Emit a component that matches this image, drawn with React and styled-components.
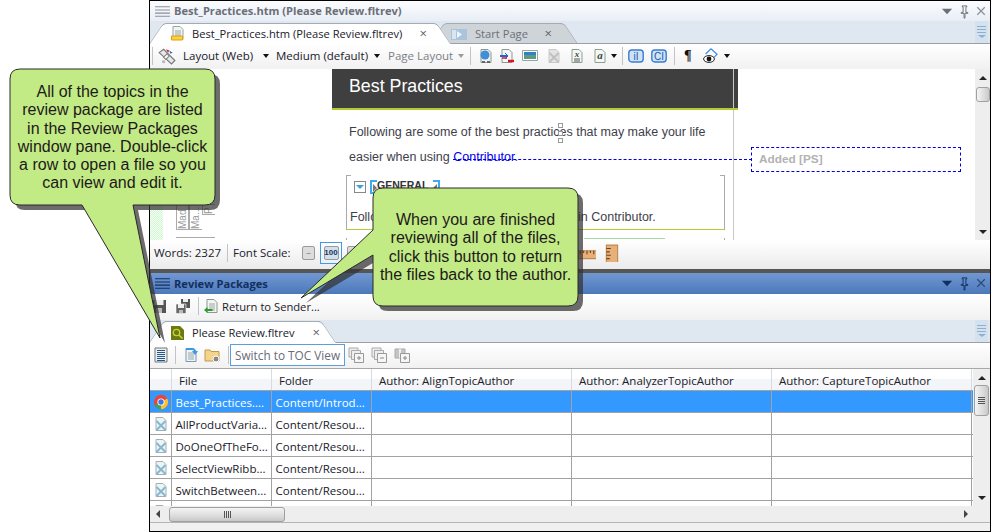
import React from "react";
import styled, { createGlobalStyle } from "styled-components";

const GlobalStyle = createGlobalStyle`
  html, body {
    margin: 0;
    padding: 0;
    background: #fff;
  }
  body {
    width: 991px;
    height: 532px;
    overflow: hidden;
    font-family: "Open Sans", "Noto Sans", sans-serif;
    color: #20202a;
  }
`;

const Page = styled.div`
  position: relative;
  width: 991px;
  height: 532px;
  padding-left: 149px;
  box-sizing: border-box;
`;

const Window = styled.div`
  width: 842px;
  height: 532px;
  box-sizing: border-box;
  border: 1px solid #000;
  display: flex;
  flex-direction: column;
  background: #fff;
  overflow: hidden;
`;

const TitleBar = styled.div`
  height: ${(p) => (p.$blue ? "21px" : "20px")};
  flex: none;
  display: flex;
  align-items: center;
  padding: 0 1px 0 4px;
  background: ${(p) =>
    p.$blue
      ? "linear-gradient(#7198d2, #4c78ba)"
      : "linear-gradient(#fbfcfe, #e9eef6)"};
`;

const TitleText = styled.span`
  flex: 1;
  margin-left: 3px;
  padding-bottom: ${(p) => (p.$blue ? "0" : "2px")};
  font-size: 11.1px;
  font-weight: 700;
  white-space: nowrap;
  color: ${(p) => (p.$blue ? "#12305f" : "#6a6f78")};
`;

const TitleIcons = styled.div`
  display: flex;
  align-items: center;
  gap: 2px;
`;

const TabStrip = styled.div`
  height: ${(p) => p.$h}px;
  flex: none;
  box-sizing: border-box;
  display: flex;
  align-items: flex-end;
  background: #dfe7f0;
  border-bottom: 1px solid #9aa0a6;
`;

const Tab = styled.div`
  position: relative;
  box-sizing: border-box;
  width: ${(p) => p.$w}px;
  height: ${(p) => p.$h}px;
  margin-left: ${(p) => p.$ml}px;
  margin-bottom: ${(p) => (p.$active ? "-1px" : "0")};
  display: flex;
  align-items: center;
  background: ${(p) => (p.$active ? "#fff" : "#cfd4d9")};
  border-top: 1px solid #a4abb3;
  color: ${(p) => (p.$active ? "#20202a" : "#6c7078")};
  z-index: ${(p) => (p.$active ? 2 : 1)};

  &::before,
  &::after {
    content: "";
    position: absolute;
    top: -1px;
    bottom: 0;
    width: 18px;
    background: inherit;
    border-top: 1px solid #a4abb3;
  }
  &::before {
    left: -9px;
    transform: skewX(-34deg);
    border-left: 1px solid #a4abb3;
    border-top-left-radius: 4px;
  }
  &::after {
    right: -9px;
    transform: skewX(34deg);
    border-right: 1px solid #a4abb3;
    border-top-right-radius: 4px;
  }
`;

const TabInner = styled.div`
  position: relative;
  z-index: 1;
  width: 100%;
  box-sizing: border-box;
  display: flex;
  align-items: center;
  padding-left: 5px;
  padding-bottom: ${(p) => (p.$lift ? "2px" : "0")};
`;

const TabLabel = styled.span`
  margin-left: ${(p) => p.$ml}px;
  font-size: 11.15px;
  white-space: nowrap;
`;

const TabClose = styled.span`
  margin-left: auto;
  margin-right: ${(p) => p.$mr}px;
  font-size: 13px;
  line-height: 1;
  color: #606468;
`;

const StripButton = styled.div`
  margin-left: auto;
  margin-right: 2px;
  align-self: stretch;
  width: 13px;
  display: flex;
  flex-direction: column;
  align-items: center;
  justify-content: center;
  gap: 2px;
  background: #d4e2ef;
`;

const StripLine = styled.i`
  display: block;
  width: 9px;
  height: 1px;
  background: #8fb0cc;
`;

const StripArrow = styled.i`
  display: block;
  width: 0;
  height: 0;
  border-left: 4px solid transparent;
  border-right: 4px solid transparent;
  border-top: 3px solid #8fb0cc;
`;

const Toolbar = styled.div`
  height: ${(p) => p.$h}px;
  flex: none;
  box-sizing: border-box;
  display: flex;
  align-items: center;
  padding-bottom: 2px;
  background: linear-gradient(#fff, #f1f1f1);
  border-bottom: ${(p) => (p.$line ? "1px solid #a8a8a8" : "none")};
`;

const Sep = styled.i`
  display: block;
  width: 1px;
  height: 18px;
  flex: none;
  margin-left: ${(p) => p.$ml}px;
  background: #c0c4c8;
`;

const Slot = styled.span`
  display: flex;
  flex: none;
  margin-left: ${(p) => p.$ml || 0}px;
`;

const ToolLabel = styled.span`
  flex: none;
  width: ${(p) => p.$w}px;
  margin-left: ${(p) => p.$ml}px;
  font-size: ${(p) => p.$size || 11.5}px;
  white-space: nowrap;
  color: ${(p) => (p.$muted ? "#7c7e88" : "#20202a")};
`;

const Caret = styled.i`
  display: block;
  flex: none;
  margin-left: ${(p) => p.$ml}px;
  width: 0;
  height: 0;
  border-left: 3.5px solid transparent;
  border-right: 3.5px solid transparent;
  border-top: 4px solid ${(p) => (p.$muted ? "#9a9a9a" : "#111")};
`;

const Pilcrow = styled.span`
  flex: none;
  width: 10px;
  margin-left: 9px;
  font: 700 14px "Liberation Serif", serif;
  color: #111;
`;

const EditorRow = styled.div`
  height: 171px;
  flex: none;
  display: flex;
  background: #fff;
  overflow: hidden;
`;

const Gutter = styled.div`
  width: 182px;
  flex: none;
  display: flex;
  align-items: flex-end;
  gap: 13px;
`;

const ChangeBand = styled.div`
  width: 13px;
  height: 60px;
  background: repeating-conic-gradient(#d4f8d4 0 25%, #f2fff2 0 50%) 0 0 / 2px 2px;
`;

const LabelStack = styled.div`
  display: flex;
  flex-direction: column;
`;

const LabelRow = styled.div`
  display: flex;
  height: 26px;
`;

const TagCell = styled.span`
  box-sizing: border-box;
  width: 13px;
  height: ${(p) => p.$h}px;
  border: 1px solid #aaa;
  border-left-width: ${(p) => (p.$first ? "1px" : "0")};
  writing-mode: vertical-rl;
  transform: rotate(180deg);
  font: 10px/11px "Liberation Sans", sans-serif;
  color: #999;
  overflow: hidden;
  white-space: nowrap;
`;

const LabelFoot = styled.div`
  height: 2px;
  margin-top: 7px;
  border-top: 1px solid #aaa;
`;

const DocColumn = styled.div`
  width: 401px;
  flex: none;
  border-right: 1px solid #c8c8c8;
  position: relative;
`;

const DocHeader = styled.div`
  width: 406px;
  height: 41px;
  box-sizing: border-box;
  padding: 5px 0 0 17px;
  background: linear-gradient(
    90deg,
    #3f3f3f 401px,
    #c8c8c8 401px,
    #c8c8c8 402px,
    #3f3f3f 402px
  );
  border-bottom: 2px solid #b4cc2e;
  color: #fff;
  font: 17.8px/24px "Liberation Sans", sans-serif;
  position: relative;
`;

const DocBody = styled.div`
  padding: 10px 0 0 17px;
  font: 12.5px/25px "Liberation Sans", sans-serif;
  color: #3e3e4a;
`;

const DocLine = styled.div`
  white-space: nowrap;
  position: relative;
`;

const DocLink = styled.span`
  color: #0000f0;
`;

const Handle = styled.i`
  position: absolute;
  left: 209px;
  top: ${(p) => p.$top}px;
  width: 3px;
  height: 3px;
  border: 1px solid #999;
  background: #fff;
`;

const Frame = styled.div`
  margin: 5px 0 0 -3px;
  width: 379px;
  height: 55px;
  box-sizing: border-box;
  border-left: 1px solid #aaa;
  border-right: 1px solid #aaa;
  border-bottom: 1px solid #b4cc2e;
  position: relative;
  padding-left: 3px;

  &::before,
  &::after {
    content: "";
    position: absolute;
    top: 0;
    width: 4px;
    border-top: 1px solid #aaa;
  }
  &::before {
    left: 0;
  }
  &::after {
    right: 0;
  }
`;

const FrameHead = styled.div`
  display: flex;
  align-items: center;
  height: 21px;
  padding: 2px 0 0 4px;
  box-sizing: border-box;
`;

const Toggle = styled.span`
  box-sizing: border-box;
  width: 12px;
  height: 12px;
  border: 1px solid #888;
  display: flex;
  align-items: center;
  justify-content: center;
`;

const ToggleArrow = styled.i`
  width: 0;
  height: 0;
  border-left: 4px solid transparent;
  border-right: 4px solid transparent;
  border-top: 4px solid #3aa0e0;
`;

const Heading = styled.span`
  position: relative;
  margin-left: 4px;
  box-sizing: border-box;
  width: 70px;
  height: 14px;
  padding-left: 7px;
  font: 700 10.5px/10px "Liberation Sans", sans-serif;
  color: #333;
  white-space: nowrap;

  &::before,
  &::after {
    content: "";
    position: absolute;
    top: 0;
    bottom: 0;
    width: 5px;
    border-top: 2px solid #3fa9f0;
    border-bottom: 2px solid #3fa9f0;
  }
  &::before {
    left: 0;
    border-left: 2px solid #3fa9f0;
  }
  &::after {
    right: 0;
    border-right: 2px solid #3fa9f0;
  }
`;

const HeadingMark = styled.i`
  position: absolute;
  top: 4px;
  ${(p) => (p.$side === "left" ? "left: 3px;" : "right: 3px;")}
  width: 0;
  height: 0;
  border-top: 4px solid transparent;
  border-bottom: 4px solid transparent;
  ${(p) =>
    p.$side === "left"
      ? "border-left: 4px solid #777;"
      : "border-right: 4px solid #777;"}
`;

const FrameText = styled.div`
  margin-top: 9px;
  display: flex;
  white-space: nowrap;
`;

const FrameLead = styled.span`
  flex: none;
  width: 228px;
`;

const NextFrame = styled.div`
  margin: 8px 0 0 -3px;
  width: 379px;
  height: 4px;
  box-sizing: border-box;
  border-left: 1px solid #aaa;
  border-right: 1px solid #aaa;
  display: flex;
`;

const NextRule = styled.i`
  display: block;
  margin-left: 237px;
  width: 81px;
  height: 1px;
  background: #a8d8a0;
`;

const MarginColumn = styled.div`
  flex: 1;
  padding: 78px 0 0 17px;
`;

const Comment = styled.div`
  position: relative;
  box-sizing: border-box;
  width: 210px;
  height: 25px;
  padding-left: 7px;
  border: 1px dashed #0000e0;
  font: 700 11.8px/23px "Liberation Sans", sans-serif;
  color: #b2b2b2;

  &::before {
    content: "";
    position: absolute;
    right: 100%;
    top: 11px;
    width: 299px;
    border-top: 1px dashed #0000e0;
  }
`;

const VScroll = styled.div`
  width: ${(p) => p.$w}px;
  flex: none;
  display: flex;
  flex-direction: column;
  align-items: center;
  background: #eeeeee;
`;

const Arrow = styled.i`
  display: block;
  flex: none;
  width: 0;
  height: 0;
  border-left: 4px solid transparent;
  border-right: 4px solid transparent;
  ${(p) =>
    p.$dir === "up"
      ? "border-bottom: 4px solid #222;"
      : "border-top: 4px solid #222;"}
  margin-top: ${(p) => p.$mt || 0}px;
  margin-bottom: ${(p) => p.$mb || 0}px;
`;

const SideArrow = styled.i`
  display: block;
  flex: none;
  width: 0;
  height: 0;
  border-top: 4px solid transparent;
  border-bottom: 4px solid transparent;
  ${(p) =>
    p.$dir === "left"
      ? "border-right: 4px solid #444;"
      : "border-left: 4px solid #444;"}
  margin-left: ${(p) => p.$ml}px;
`;

const Thumb = styled.div`
  box-sizing: border-box;
  flex: none;
  width: ${(p) => p.$w}px;
  height: ${(p) => p.$h}px;
  margin-top: ${(p) => p.$mt || 0}px;
  margin-left: ${(p) => p.$ml || 0}px;
  display: flex;
  flex-direction: ${(p) => (p.$vertical ? "column" : "row")};
  align-items: center;
  justify-content: center;
  gap: 1px;
  border: 1px solid #a0a0a0;
  border-radius: 3px;
  background: linear-gradient(
    ${(p) => (p.$vertical ? "90deg" : "180deg")},
    #f4f4f4,
    #dcdcdc 60%,
    #c8c8c8
  );
`;

const Grip = styled.i`
  display: block;
  background: #555;
  width: ${(p) => (p.$vertical ? "7px" : "1px")};
  height: ${(p) => (p.$vertical ? "1px" : "7px")};
`;

const Spacer = styled.div`
  flex: 1;
`;

const StatusBar = styled.div`
  height: 25px;
  flex: none;
  display: flex;
  align-items: center;
  background: linear-gradient(#fff, #ebebeb);
  border-bottom: 4px solid #565656;
  box-sizing: content-box;
  padding-bottom: 4px;
`;

const ScaleButton = styled.span`
  flex: none;
  box-sizing: border-box;
  margin-left: ${(p) => p.$ml}px;
  width: ${(p) => p.$w}px;
  height: ${(p) => p.$h}px;
  display: flex;
  align-items: center;
  justify-content: center;
  font: 700 8px "Liberation Sans", sans-serif;
  color: #235;
  border: 1px solid ${(p) => (p.$active ? "#3f9ae8" : "transparent")};
`;

const ScaleFace = styled.span`
  box-sizing: border-box;
  width: 15px;
  height: 14px;
  display: flex;
  align-items: center;
  justify-content: center;
  border: 1px solid #9a9a9a;
  border-radius: 2px;
  background: ${(p) => (p.$on ? "#cfe0f0" : "#dcdcdc")};
  color: ${(p) => (p.$on ? "#235" : "#888")};
`;

const TocBox = styled.div`
  flex: none;
  box-sizing: border-box;
  width: 115px;
  height: 22px;
  margin-left: 1px;
  padding-left: 4px;
  border: 1px solid #5a9fdc;
  background: #fff;
  font-size: 11.8px;
  line-height: 20px;
  color: #6a6a76;
  white-space: nowrap;
`;

const GridArea = styled.div`
  height: 137px;
  flex: none;
  display: flex;
`;

const Table = styled.div`
  flex: 1;
  min-width: 0;
  overflow: hidden;
`;

const Row = styled.div`
  display: grid;
  grid-template-columns: 22px 100px 100px 200px 200px 200px 1fr;
  height: 22px;
  box-sizing: border-box;
  border-bottom: 1px solid #a2a2a2;
  background: ${(p) =>
    p.$head
      ? "linear-gradient(#fff 50%, #f3f5f8 50%)"
      : p.$selected
      ? "#3399ff"
      : "#fff"};
  color: ${(p) => (p.$selected ? "#fff" : "#20202a")};
`;

const Cell = styled.div`
  box-sizing: border-box;
  display: flex;
  align-items: center;
  padding-top: 1px;
  padding-left: ${(p) => (p.$head ? "7px" : p.$icon ? "3px" : "3.5px")};
  border-right: ${(p) => (p.$noLine ? "none" : "1px solid #a2a2a2")};
  border-right-color: ${(p) => (p.$head ? "#d8dce2" : "#a2a2a2")};
  font-size: 11.5px;
  white-space: nowrap;
  overflow: hidden;
`;

const HScroll = styled.div`
  height: 16px;
  flex: none;
  display: flex;
  align-items: center;
  background: #eeeeee;
`;

const Footer = styled.div`
  flex: 1;
  border-top: 1px solid #b4b4b4;
  background: #f0f0f0;
`;

const CalloutFrame = styled.div`
  position: absolute;
  left: ${(p) => p.$left}px;
  top: ${(p) => p.$top}px;
  width: ${(p) => p.$w}px;
  height: ${(p) => p.$h}px;
  z-index: 5;
`;

const CalloutShape = styled.svg`
  display: block;
  overflow: visible;
`;

const CalloutText = styled.div`
  position: absolute;
  left: ${(p) => p.$left}px;
  top: ${(p) => p.$top}px;
  width: 205px;
  text-align: center;
  font: 16px/18.3px "Liberation Sans", sans-serif;
  color: #1e1a1a;
  white-space: nowrap;
`;

const Ico = styled.svg`
  display: block;
  flex: none;
`;

const Icon = ({ size = 16, children }) => (
  <Ico width={size} height={size} viewBox="0 0 16 16">
    {children}
  </Ico>
);

const sheet = "M3 1.5h7l3 3v10H3z";

const Sheet = ({ fill = "#f4f7f4", stroke = "#8a9a90" }) => (
  <path d={sheet} fill={fill} stroke={stroke} />
);

const Lines = () => (
  <path d="M5 6h6M5 8h6M5 10h6M5 12h6" stroke="#9aa8a0" strokeWidth="1" />
);

const MenuIcon = ({ color }) => (
  <Icon size={17}>
    <path d="M1 3.5h14M1 6.5h14M1 9.5h14M1 12.5h14" stroke={color} />
  </Icon>
);

const Triangle = ({ color }) => (
  <Icon size={15}>
    <path d="M2 5h11l-5.5 6z" fill={color} />
  </Icon>
);

const PinIcon = ({ color }) => (
  <Icon size={15}>
    <path
      d="M5.5 2h5v1h-1v6h2v1h-3v5h-1v-5h-3V9h2V3h-1z"
      fill="none"
      stroke={color}
    />
  </Icon>
);

const CloseIcon = ({ color }) => (
  <Icon size={15}>
    <path d="M3.5 3.5l8 8M11.5 3.5l-8 8" stroke={color} strokeWidth="1.3" />
  </Icon>
);

const TabDocIcon = () => (
  <Icon>
    <Sheet fill="#f2f4f6" stroke="#98a4a8" />
    <Lines />
    <path d="M1.5 11h11v4h-11z" fill="#fbd23c" stroke="#e0a010" />
  </Icon>
);

const StartPageIcon = () => (
  <Icon>
    <path d="M0 3h16v11H0z" fill="#a9c4dc" />
    <path d="M1 4h4v9H1z" fill="#d8e6f0" />
    <path d="M6 5l5 3.5-5 3.5z" fill="#eef6fb" />
  </Icon>
);

const WandIcon = () => (
  <Icon size={18}>
    <path d="M1 5l4-3 10 10-3 3z" fill="#e8e8e8" stroke="#777" />
    <path d="M5 9l3-3 2 2-3 3z" fill="#fff" stroke="#888" />
    <path d="M7 2l3 1-1 2z" fill="#c22" />
    <path d="M10 3l3 2-2 1z" fill="#26c" />
    <circle cx="5" cy="13" r="1.5" fill="#bbb" />
  </Icon>
);

const GlobeDocIcon = () => (
  <Icon>
    <Sheet fill="#eef2f6" />
    <circle cx="7" cy="7" r="4.5" fill="#3f8fd8" />
    <path d="M4 14h3M9 14h3" stroke="#666" strokeWidth="2" />
  </Icon>
);

const DiffDocIcon = () => (
  <Icon>
    <Sheet fill="#f4f6f8" />
    <path d="M1 8h8" stroke="#2266cc" strokeWidth="2" />
    <path d="M6 5l3 3-3 3" fill="none" stroke="#2266cc" />
    <path d="M9 13h6" stroke="#dd1122" strokeWidth="2.4" />
    <path d="M3 10h5" stroke="#dd1122" strokeWidth="1.4" />
  </Icon>
);

const PictureIcon = () => (
  <Icon>
    <path d="M.5 2.5h15v10H.5z" fill="#fff" stroke="#93a5a8" />
    <path d="M2 4h12v3H2z" fill="#2f80c8" />
    <path d="M2 7h12v4H2z" fill="#5f9a7c" />
  </Icon>
);

const BrokenDocIcon = ({ muted }) => (
  <Icon>
    <Sheet
      fill={muted ? "#e4e4e4" : "#eef3f3"}
      stroke={muted ? "#c8c8c8" : "#a4b0b0"}
    />
    <path
      d="M3.5 5l9 9M12.5 5l-9 9"
      stroke={muted ? "#c0c0c0" : "#84b8d2"}
      strokeWidth="2"
    />
  </Icon>
);

const LetterDocIcon = ({ letter, serif }) => (
  <Icon>
    <Sheet fill="#f4f8f4" stroke="#8aa090" />
    <text
      x="8"
      y={serif ? 11 : 9}
      textAnchor="middle"
      fontSize={serif ? 11 : 9}
      fontStyle="italic"
      fontWeight="700"
      fontFamily="Liberation Serif, serif"
      fill="#444"
    >
      {letter}
    </text>
    {!serif && <path d="M5 11h6M5 13h6" stroke="#555" />}
  </Icon>
);

const BadgeIcon = ({ letters }) => (
  <Icon>
    <rect x=".8" y="2" width="14.4" height="12" rx="3" fill="#cfe2f6" stroke="#3b7ed0" strokeWidth="1.4" />
    <text
      x="8"
      y="11.6"
      textAnchor="middle"
      fontSize="10"
      fontFamily="Liberation Sans, sans-serif"
      fill="#2458a8"
    >
      {letters}
    </text>
  </Icon>
);

const EyeIcon = () => (
  <Icon>
    <path d="M8 .7l6 5.6-4 4M8 .7L2.6 6" fill="none" stroke="#3b8edc" strokeWidth="1.2" />
    <ellipse cx="6" cy="11" rx="5.4" ry="3.4" fill="#fff" stroke="#222" />
    <circle cx="6" cy="11" r="2.4" fill="#111" />
  </Icon>
);

const RulerHIcon = () => (
  <Icon size={18}>
    <path d="M0 6h18v7H0z" fill="#e8b078" stroke="#c08850" />
    <path d="M2 6v3M5 6v2M8 6v3M11 6v2M14 6v3" stroke="#6a4420" />
  </Icon>
);

const RulerVIcon = () => (
  <Icon size={18}>
    <path d="M3 1h10v16H3z" fill="#e8b078" stroke="#c08850" />
    <path d="M3 4h4M3 7h3M3 10h4M3 13h3" stroke="#6a4420" />
  </Icon>
);

const SaveIcon = () => (
  <Icon>
    <path d="M1 2h14v13H1z" fill="#555" />
    <path d="M3.5 2h9v5h-9z" fill="#eee" />
    <path d="M5 10h6v5H5z" fill="#bbb" />
  </Icon>
);

const SaveAllIcon = () => (
  <Icon>
    <path d="M6 1h9v9H6z" fill="#555" />
    <path d="M8 1h5v3H8z" fill="#eee" />
    <path d="M1 6h10v9.500H1z" fill="#666" stroke="#fff" strokeWidth=".6" />
    <path d="M3 6h6v4H3z" fill="#eee" />
    <path d="M4 12h4v3H4z" fill="#bbb" />
  </Icon>
);

const ReturnIcon = () => (
  <Icon>
    <Sheet fill="#f2f5f2" />
    <Lines />
    <path d="M0 12l3.500-3v2h5v2h-5v2z" fill="#2c9a2c" />
  </Icon>
);

const LensTabIcon = () => (
  <Icon>
    <path d="M1 1h9l4 4v10H1z" fill="#6a7a10" />
    <circle cx="6.500" cy="7.500" r="3.200" fill="none" stroke="#c8d040" strokeWidth="1.300" />
    <path d="M9 10l3.500 3.500" stroke="#c8d040" strokeWidth="1.500" />
  </Icon>
);

const ListIcon = () => (
  <Icon>
    <path d="M2 1h12v14H2z" fill="#eee" stroke="#777" />
    <path d="M4 3.500h8M4 5.500h8M4 7.500h8M4 9.500h8M4 11.500h8M4 13.500h8" stroke="#1e5a90" />
  </Icon>
);

const ArrowDocIcon = () => (
  <Icon>
    <Sheet fill="#eef4f8" stroke="#7a98b0" />
    <Lines />
    <path d="M3 1h7a4 4 0 0 1 3 3h2l-3 4-3-4h2a2 2 0 0 0-2-1H3z" fill="#3a9ae0" />
  </Icon>
);

const FolderGearIcon = () => (
  <Icon>
    <path d="M1 3h5l1 1.500h8V14H1z" fill="#f4d48c" stroke="#c09a50" />
    <circle cx="12" cy="12" r="3" fill="#888" stroke="#fff" />
  </Icon>
);

const StackIcon = ({ sign }) => (
  <Icon>
    <path d="M1 1h9v9H1z" fill="#eee" stroke="#aaa" />
    <path d="M3.500 3.500h9v9h-9z" fill="#eee" stroke="#aaa" />
    <path d="M6.500 6.500h9v9h-9z" fill="#f6f6f6" stroke="#999" />
    <path d={sign === "plus" ? "M9 11h4M11 9v4" : "M9 11h4"} stroke="#888" />
  </Icon>
);

const PackPlusIcon = () => (
  <Icon>
    <path d="M1 2h10v9H1z" fill="#c4c4c4" stroke="#aaa" />
    <path d="M5 2h2v9H5z" fill="#eee" />
    <path d="M6.500 6.500h9v9h-9z" fill="#f6f6f6" stroke="#999" />
    <path d="M9 11h4M11 9v4" stroke="#888" />
  </Icon>
);

const ChromeIcon = () => (
  <Icon>
    <circle cx="8" cy="8" r="7.200" fill="#e8453c" />
    <path d="M8 8L1.800 11.600A7.200 7.200 0 0 0 8 15.200z" fill="#3aa757" />
    <path d="M8 8l6.200-3.600A7.200 7.200 0 0 1 8 15.200z" fill="#fbc02d" />
    <circle cx="8" cy="8" r="3.600" fill="#fff" />
    <circle cx="8" cy="8" r="2.700" fill="#3b78e7" />
  </Icon>
);

const rows = [
  { file: "Best_Practices....", folder: "Content/Introd...", selected: true },
  { file: "AllProductVaria...", folder: "Content/Resou..." },
  { file: "DoOneOfTheFo...", folder: "Content/Resou..." },
  { file: "SelectViewRibb...", folder: "Content/Resou..." },
  { file: "SwitchBetween...", folder: "Content/Resou..." },
  { file: "", folder: "" },
];

const WindowControls = ({ color, closeColor }) => (
  <TitleIcons>
    <Triangle color={color} />
    <PinIcon color={color} />
    <CloseIcon color={closeColor} />
  </TitleIcons>
);

const StripMenu = () => (
  <StripButton>
    <StripLine />
    <StripLine />
    <StripLine />
    <StripArrow />
  </StripButton>
);

function EditorPane() {
  return (
    <EditorRow>
      <Gutter>
        <ChangeBand />
        <LabelStack>
          <LabelRow>
            <TagCell $first $h={26}>Mad</TagCell>
            <TagCell $h={26}>Ma...</TagCell>
            <TagCell $h={11}>P</TagCell>
          </LabelRow>
          <LabelFoot />
        </LabelStack>
      </Gutter>
      <DocColumn>
        <DocHeader>Best Practices</DocHeader>
        <DocBody>
          <DocLine>
            Following are some of the best practices that may make your life
            <Handle $top={3} />
            <Handle $top={11} />
            <Handle $top={18} />
          </DocLine>
          <DocLine>
            easier when using <DocLink>Contributor</DocLink>.
          </DocLine>
          <Frame>
            <FrameHead>
              <Toggle>
                <ToggleArrow />
              </Toggle>
              <Heading>
                GENERAL
                <HeadingMark $side="left" />
                <HeadingMark $side="right" />
              </Heading>
            </FrameHead>
            <FrameText>
              <FrameLead>Follo</FrameLead>
              <span>in Contributor.</span>
            </FrameText>
          </Frame>
          <NextFrame>
            <NextRule />
          </NextFrame>
        </DocBody>
      </DocColumn>
      <MarginColumn>
        <Comment>Added [PS]</Comment>
      </MarginColumn>
      <VScroll $w={15}>
        <Arrow $dir="up" $mt={7} />
        <Thumb $vertical $w={14} $h={15} $mt={7} />
        <Spacer />
        <Arrow $dir="down" $mb={6} />
      </VScroll>
    </EditorRow>
  );
}

export default function App() {
  return (
    <Page>
      <GlobalStyle />
      <Window>
        <TitleBar>
          <MenuIcon color="#8a8f98" />
          <TitleText>Best_Practices.htm (Please Review.fltrev)</TitleText>
          <WindowControls color="#6a7078" closeColor="#8a9098" />
        </TitleBar>
        <TabStrip $h={23}>
          <Tab $active $w={270} $h={21} $ml={15}>
            <TabInner $lift>
              <TabDocIcon />
              <TabLabel $ml={6}>Best_Practices.htm (Please Review.fltrev)</TabLabel>
              <TabClose $mr={8}>×</TabClose>
            </TabInner>
          </Tab>
          <Tab $w={116} $h={20} $ml={11}>
            <TabInner>
              <StartPageIcon />
              <TabLabel $ml={8}>Start Page</TabLabel>
              <TabClose $mr={10}>×</TabClose>
            </TabInner>
          </Tab>
          <StripMenu />
        </TabStrip>
        <Toolbar $h={25}>
          <Sep $ml={2} />
          <Slot $ml={5}><WandIcon /></Slot>
          <ToolLabel $w={78} $ml={7}>Layout (Web)</ToolLabel>
          <Caret $ml={2} />
          <ToolLabel $w={95} $ml={7}>Medium (default)</ToolLabel>
          <Caret $ml={3} />
          <ToolLabel $w={66} $ml={8} $muted>Page Layout</ToolLabel>
          <Caret $ml={4} $muted />
          <Sep $ml={6} />
          <Slot $ml={7}><GlobeDocIcon /></Slot>
          <Slot $ml={5}><DiffDocIcon /></Slot>
          <Slot $ml={7}><PictureIcon /></Slot>
          <Slot $ml={8}><BrokenDocIcon muted /></Slot>
          <Slot $ml={7}><LetterDocIcon letter="x" /></Slot>
          <Slot $ml={7}><LetterDocIcon letter="a" serif /></Slot>
          <Caret $ml={3} />
          <Sep $ml={5} />
          <Slot $ml={5}><BadgeIcon letters="iI" /></Slot>
          <Slot $ml={7}><BadgeIcon letters="CI" /></Slot>
          <Sep $ml={7} />
          <Pilcrow>¶</Pilcrow>
          <Slot $ml={9}><EyeIcon /></Slot>
          <Caret $ml={5} />
        </Toolbar>
        <EditorPane />
        <StatusBar>
          <ToolLabel $w={64} $ml={4}>Words: 2327</ToolLabel>
          <Sep $ml={9} />
          <ToolLabel $w={57} $ml={5}>Font Scale:</ToolLabel>
          <ScaleButton $ml={11} $w={15} $h={22}>
            <ScaleFace>–</ScaleFace>
          </ScaleButton>
          <ScaleButton $ml={4} $w={22} $h={22} $active>
            <ScaleFace $on>100</ScaleFace>
          </ScaleButton>
          <ScaleButton $ml={4} $w={15} $h={22}>
            <ScaleFace>+</ScaleFace>
          </ScaleButton>
          <Slot $ml={217}><RulerHIcon /></Slot>
          <Slot $ml={7}><RulerVIcon /></Slot>
        </StatusBar>
        <TitleBar $blue>
          <MenuIcon color="#10305f" />
          <TitleText $blue>Review Packages</TitleText>
          <WindowControls color="#10305f" closeColor="#2c4a78" />
        </TitleBar>
        <Toolbar $h={26}>
          <Slot $ml={1}><SaveIcon /></Slot>
          <Slot $ml={8}><SaveAllIcon /></Slot>
          <Sep $ml={7} />
          <Slot $ml={5}><ReturnIcon /></Slot>
          <ToolLabel $w={100} $ml={2} $size={11.2}>Return to Sender...</ToolLabel>
        </Toolbar>
        <TabStrip $h={23}>
          <Tab $active $w={155} $h={22} $ml={15}>
            <TabInner>
              <LensTabIcon />
              <TabLabel $ml={6}>Please Review.fltrev</TabLabel>
              <TabClose $mr={0}>×</TabClose>
            </TabInner>
          </Tab>
          <StripMenu />
        </TabStrip>
        <Toolbar $h={26} $line>
          <Slot $ml={3}><ListIcon /></Slot>
          <Sep $ml={6} />
          <Slot $ml={7}><ArrowDocIcon /></Slot>
          <Slot $ml={5}><FolderGearIcon /></Slot>
          <Sep $ml={8} />
          <TocBox>Switch to TOC View</TocBox>
          <Slot $ml={3}><StackIcon sign="plus" /></Slot>
          <Slot $ml={7}><StackIcon sign="minus" /></Slot>
          <Slot $ml={7}><PackPlusIcon /></Slot>
        </Toolbar>
        <GridArea>
          <Table>
            <Row $head>
              <Cell $head />
              <Cell $head>File</Cell>
              <Cell $head>Folder</Cell>
              <Cell $head>Author: AlignTopicAuthor</Cell>
              <Cell $head>Author: AnalyzerTopicAuthor</Cell>
              <Cell $head>Author: CaptureTopicAuthor</Cell>
              <Cell $head $noLine />
            </Row>
            {rows.map((r, i) => (
              <Row key={i} $selected={r.selected}>
                <Cell $icon>{r.selected ? <ChromeIcon /> : <BrokenDocIcon />}</Cell>
                <Cell>{r.file}</Cell>
                <Cell>{r.folder}</Cell>
                <Cell />
                <Cell />
                <Cell />
                <Cell $noLine />
              </Row>
            ))}
          </Table>
          <VScroll $w={17}>
            <Arrow $dir="up" $mt={7} />
            <Thumb $vertical $w={15} $h={31} $mt={5}>
              <Grip $vertical />
              <Grip $vertical />
              <Grip $vertical />
              <Grip $vertical />
            </Thumb>
            <Spacer />
            <Arrow $dir="down" $mb={6} />
          </VScroll>
        </GridArea>
        <HScroll>
          <SideArrow $dir="left" $ml={6} />
          <Thumb $w={116} $h={15} $ml={9}>
            <Grip />
            <Grip />
            <Grip />
            <Grip />
          </Thumb>
          <SideArrow $dir="right" $ml={679} />
        </HScroll>
        <Footer />
      </Window>

      <CalloutFrame $left={0} $top={60} $w={230} $h={290}>
        <CalloutShape width="230" height="290" viewBox="0 0 230 290">
          <path
            transform="translate(5 5)"
            d="M20 9H205Q215 9 215 19V135Q215 145 205 145H133L160 278L82 145H20Q10 145 10 135V19Q10 9 20 9Z"
            fill="#333"
            opacity=".72"
          />
          <path
            d="M20 9H205Q215 9 215 19V135Q215 145 205 145H133L160 278L82 145H20Q10 145 10 135V19Q10 9 20 9Z"
            fill="#c2ea85"
            stroke="#2a2a2a"
          />
        </CalloutShape>
        <CalloutText $left={10} $top={23}>
          All of the topics in the
          <br />
          review package are listed
          <br />
          in the Review Packages
          <br />
          window pane. Double-click
          <br />
          a row to open a file so you
          <br />
          can view and edit it.
        </CalloutText>
      </CalloutFrame>

      <CalloutFrame $left={290} $top={180} $w={300} $h={135}>
        <CalloutShape width="300" height="135" viewBox="0 0 300 135">
          <path
            transform="translate(5 5)"
            d="M93 8H278Q288 8 288 18V116Q288 126 278 126H93Q83 126 83 116V75L11 118L83 50V18Q83 8 93 8Z"
            fill="#333"
            opacity=".72"
          />
          <path
            d="M93 8H278Q288 8 288 18V116Q288 126 278 126H93Q83 126 83 116V75L11 118L83 50V18Q83 8 93 8Z"
            fill="#c2ea85"
            stroke="#2a2a2a"
          />
        </CalloutShape>
        <CalloutText $left={83} $top={31}>
          When you are finished
          <br />
          reviewing all of the files,
          <br />
          click this button to return
          <br />
          the files back to the author.
        </CalloutText>
      </CalloutFrame>
    </Page>
  );
}
